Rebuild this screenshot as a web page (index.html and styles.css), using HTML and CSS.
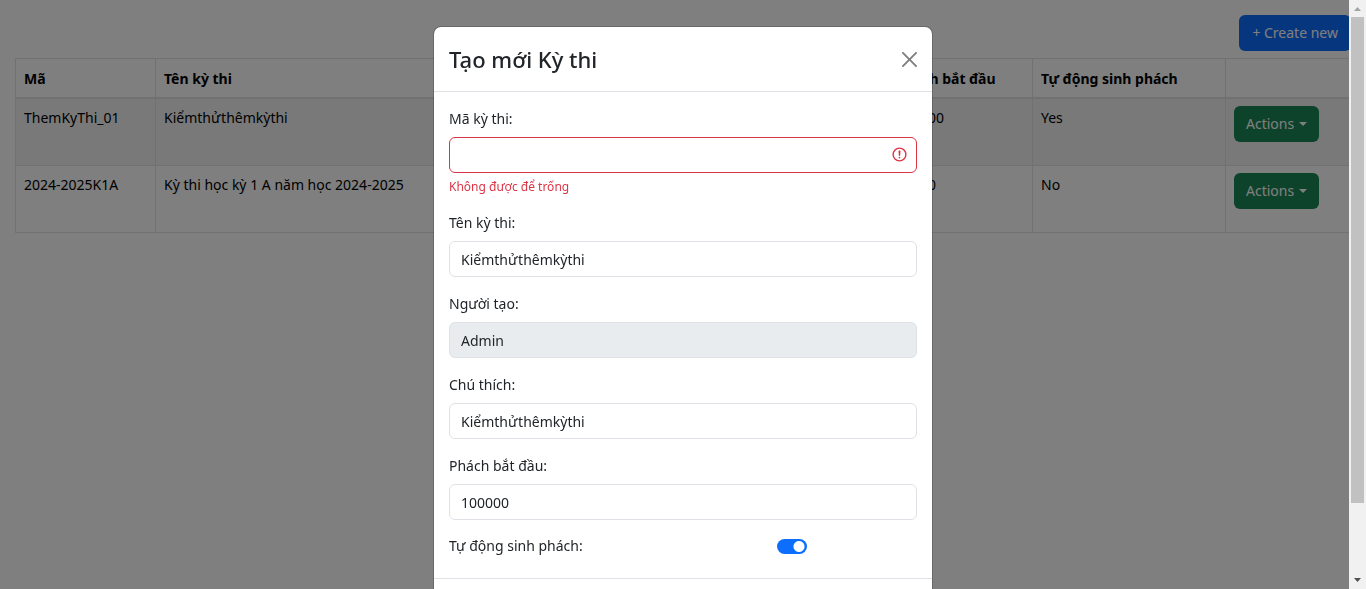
FILE: index.html
```html
<!DOCTYPE html>
<html lang="vi">
<head>
<meta charset="utf-8">
<meta name="viewport" content="width=device-width, initial-scale=1">
<title>Kỳ thi</title>
<link rel="stylesheet" href="styles.css">
</head>
<body>
<main class="page">
  <div class="toolbar">
    <button type="button" class="btn btn-primary">+ Create new</button>
  </div>
  <table class="table">
    <colgroup>
      <col class="col-code">
      <col>
      <col class="col-start">
      <col class="col-auto">
      <col class="col-actions">
    </colgroup>
    <thead>
      <tr><th>Mã</th><th>Tên kỳ thi</th><th>Phách bắt đầu</th><th>Tự động sinh phách</th><th></th></tr>
    </thead>
    <tbody>
      <tr class="striped">
        <td>ThemKyThi_01</td><td>Kiểmthửthêmkỳthi</td><td>100000</td><td>Yes</td>
        <td><button type="button" class="btn btn-success">Actions<span class="caret"></span></button></td>
      </tr>
      <tr>
        <td>2024-2025K1A</td><td>Kỳ thi học kỳ 1 A năm học 2024-2025</td><td>10000</td><td>No</td>
        <td><button type="button" class="btn btn-success">Actions<span class="caret"></span></button></td>
      </tr>
    </tbody>
  </table>
</main>

<div class="overlay">
  <div class="modal" role="dialog" aria-modal="true" aria-labelledby="modal-title">
    <header class="modal-header">
      <h4 class="modal-title" id="modal-title">Tạo mới Kỳ thi</h4>
      <button type="button" class="close" aria-label="Close">
        <svg viewBox="0 0 16 16" width="15" height="15" aria-hidden="true"><path d="M.293.293a1 1 0 0 1 1.414 0L8 6.586 14.293.293a1 1 0 1 1 1.414 1.414L9.414 8l6.293 6.293a1 1 0 0 1-1.414 1.414L8 9.414l-6.293 6.293a1 1 0 0 1-1.414-1.414L6.586 8 .293 1.707a1 1 0 0 1 0-1.414z"/></svg>
      </button>
    </header>
    <form class="modal-body">
      <div class="field">
        <label for="code">Mã kỳ thi:</label>
        <div class="input-wrap">
          <input class="input invalid" id="code" type="text" aria-describedby="code-error">
          <svg class="invalid-icon" viewBox="0 0 12 12" width="17" height="17" fill="none" stroke="#dc3545" aria-hidden="true"><circle cx="6" cy="6" r="4.5"/><path stroke-linejoin="round" d="M5.8 3.6h.4L6 6.5z"/><circle cx="6" cy="8.2" r=".6" fill="#dc3545" stroke="none"/></svg>
        </div>
        <div class="error" id="code-error">Không được để trống</div>
      </div>
      <div class="field">
        <label for="name">Tên kỳ thi:</label>
        <input class="input" id="name" type="text" value="Kiểmthửthêmkỳthi">
      </div>
      <div class="field">
        <label for="creator">Người tạo:</label>
        <input class="input" id="creator" type="text" value="Admin" disabled>
      </div>
      <div class="field">
        <label for="note">Chú thích:</label>
        <input class="input" id="note" type="text" value="Kiểmthửthêmkỳthi">
      </div>
      <div class="field">
        <label for="start">Phách bắt đầu:</label>
        <input class="input" id="start" type="text" value="100000">
      </div>
      <div class="switch-row">
        <label for="auto">Tự động sinh phách:</label>
        <input class="switch" id="auto" type="checkbox" role="switch" checked>
      </div>
    </form>
    <footer class="modal-footer"></footer>
  </div>
</div>

<div class="scrollbar" aria-hidden="true">
  <svg class="arrow-up" viewBox="0 0 17 17" width="17" height="17"><path d="M5 11h7L8.500 7z"/></svg>
  <div class="track"><div class="thumb"></div></div>
  <svg class="arrow-down" viewBox="0 0 17 17" width="17" height="17"><path d="M5 6h7L8.500 10z"/></svg>
</div>
</body>
</html>
```
FILE: styles.css
```css
* { box-sizing: border-box; }

body {
  margin: 0;
  height: 100vh;
  overflow: hidden;
  background: #fff;
  color: #212529;
  font: 14px/24px "Noto Sans", "Open Sans", sans-serif;
}

button, input { font: inherit; }

.page { padding: 15px; }

.toolbar {
  display: flex;
  justify-content: flex-end;
  margin-bottom: 7px;
}

.btn {
  display: inline-flex;
  align-items: center;
  gap: 5px;
  height: 36px;
  padding: 0 12px;
  border: 0;
  border-radius: 6px;
  color: #fff;
  white-space: nowrap;
}
.btn-primary {
  padding: 0 13px;
  background: #0d6efd;
}
.btn-success { background: #198754; }

.caret {
  border: 4px solid transparent;
  border-top-color: currentColor;
  border-bottom: 0;
}

.table {
  width: 100%;
  table-layout: fixed;
  border-collapse: collapse;
  color: #000;
}
.table th, .table td {
  padding: 7px 8px;
  border: 1px solid #dee2e6;
  text-align: left;
  vertical-align: top;
}
.table th {
  padding: 8px 8px 6px;
  font-weight: 700;
}
.table thead tr { border-bottom: 2px solid #dee2e6; }
.table td { padding-bottom: 16px; }
.table tbody tr { height: 67px; }
.striped { background: #f2f2f2; }
.col-code { width: 140px; }
.col-start { width: 145px; }
.col-auto { width: 193px; }
.col-actions { width: 125px; }

.overlay {
  position: fixed;
  inset: 0;
  overflow: hidden;
  padding-top: 26px;
  background: rgba(0, 0, 0, .5);
}

.modal {
  max-width: 500px;
  margin: 0 auto;
  border: 1px solid rgba(0, 0, 0, .175);
  border-radius: 8px;
  background: #fff;
  background-clip: padding-box;
}

.modal-header {
  display: flex;
  align-items: center;
  justify-content: space-between;
  padding: 15px;
  border-bottom: 1px solid #dee2e6;
}
.modal-title {
  margin: 0;
  font-size: 22px;
  font-weight: 500;
  line-height: 34px;
}
.close {
  display: flex;
  padding: 0;
  border: 0;
  background: none;
  opacity: .5;
}

.modal-body {
  display: flex;
  flex-direction: column;
  gap: 15px;
  padding: 15px 15px 21px;
}
.field {
  display: flex;
  flex-direction: column;
}
.field label { margin-bottom: 6px; }

.input {
  display: block;
  width: 100%;
  height: 36px;
  padding: 0 11px;
  border: 1px solid #dee2e6;
  border-radius: 6px;
  background: #fff;
  color: #212529;
}
.input:disabled { background: #e9ecef; }
.invalid { border-color: #dc3545; }
.input-wrap { position: relative; }
.invalid-icon {
  position: absolute;
  top: 9px;
  right: 9px;
}
.error {
  margin-top: 5px;
  color: #dc3545;
  font-size: 12px;
  line-height: 18px;
}

.switch-row {
  display: grid;
  grid-template-columns: 70% 1fr;
  align-items: center;
  line-height: 22px;
}
.switch {
  appearance: none;
  width: 30px;
  height: 15px;
  margin: 0;
  border-radius: 15px;
  background: #0d6efd radial-gradient(circle at 22px 50%, #fff 5px, transparent 6px);
}

.modal-footer {
  height: 66px;
  border-top: 1px solid #dee2e6;
}

.scrollbar {
  position: fixed;
  top: 0;
  right: 0;
  bottom: 0;
  display: flex;
  flex-direction: column;
  width: 17px;
  background: #f1f1f1;
}
.track {
  flex: 1;
  padding: 0 2px;
}
.thumb {
  height: 87.5%;
  background: #c1c1c1;
}
.arrow-up { fill: #a3a3a3; }
.arrow-down { fill: #505050; }
```
